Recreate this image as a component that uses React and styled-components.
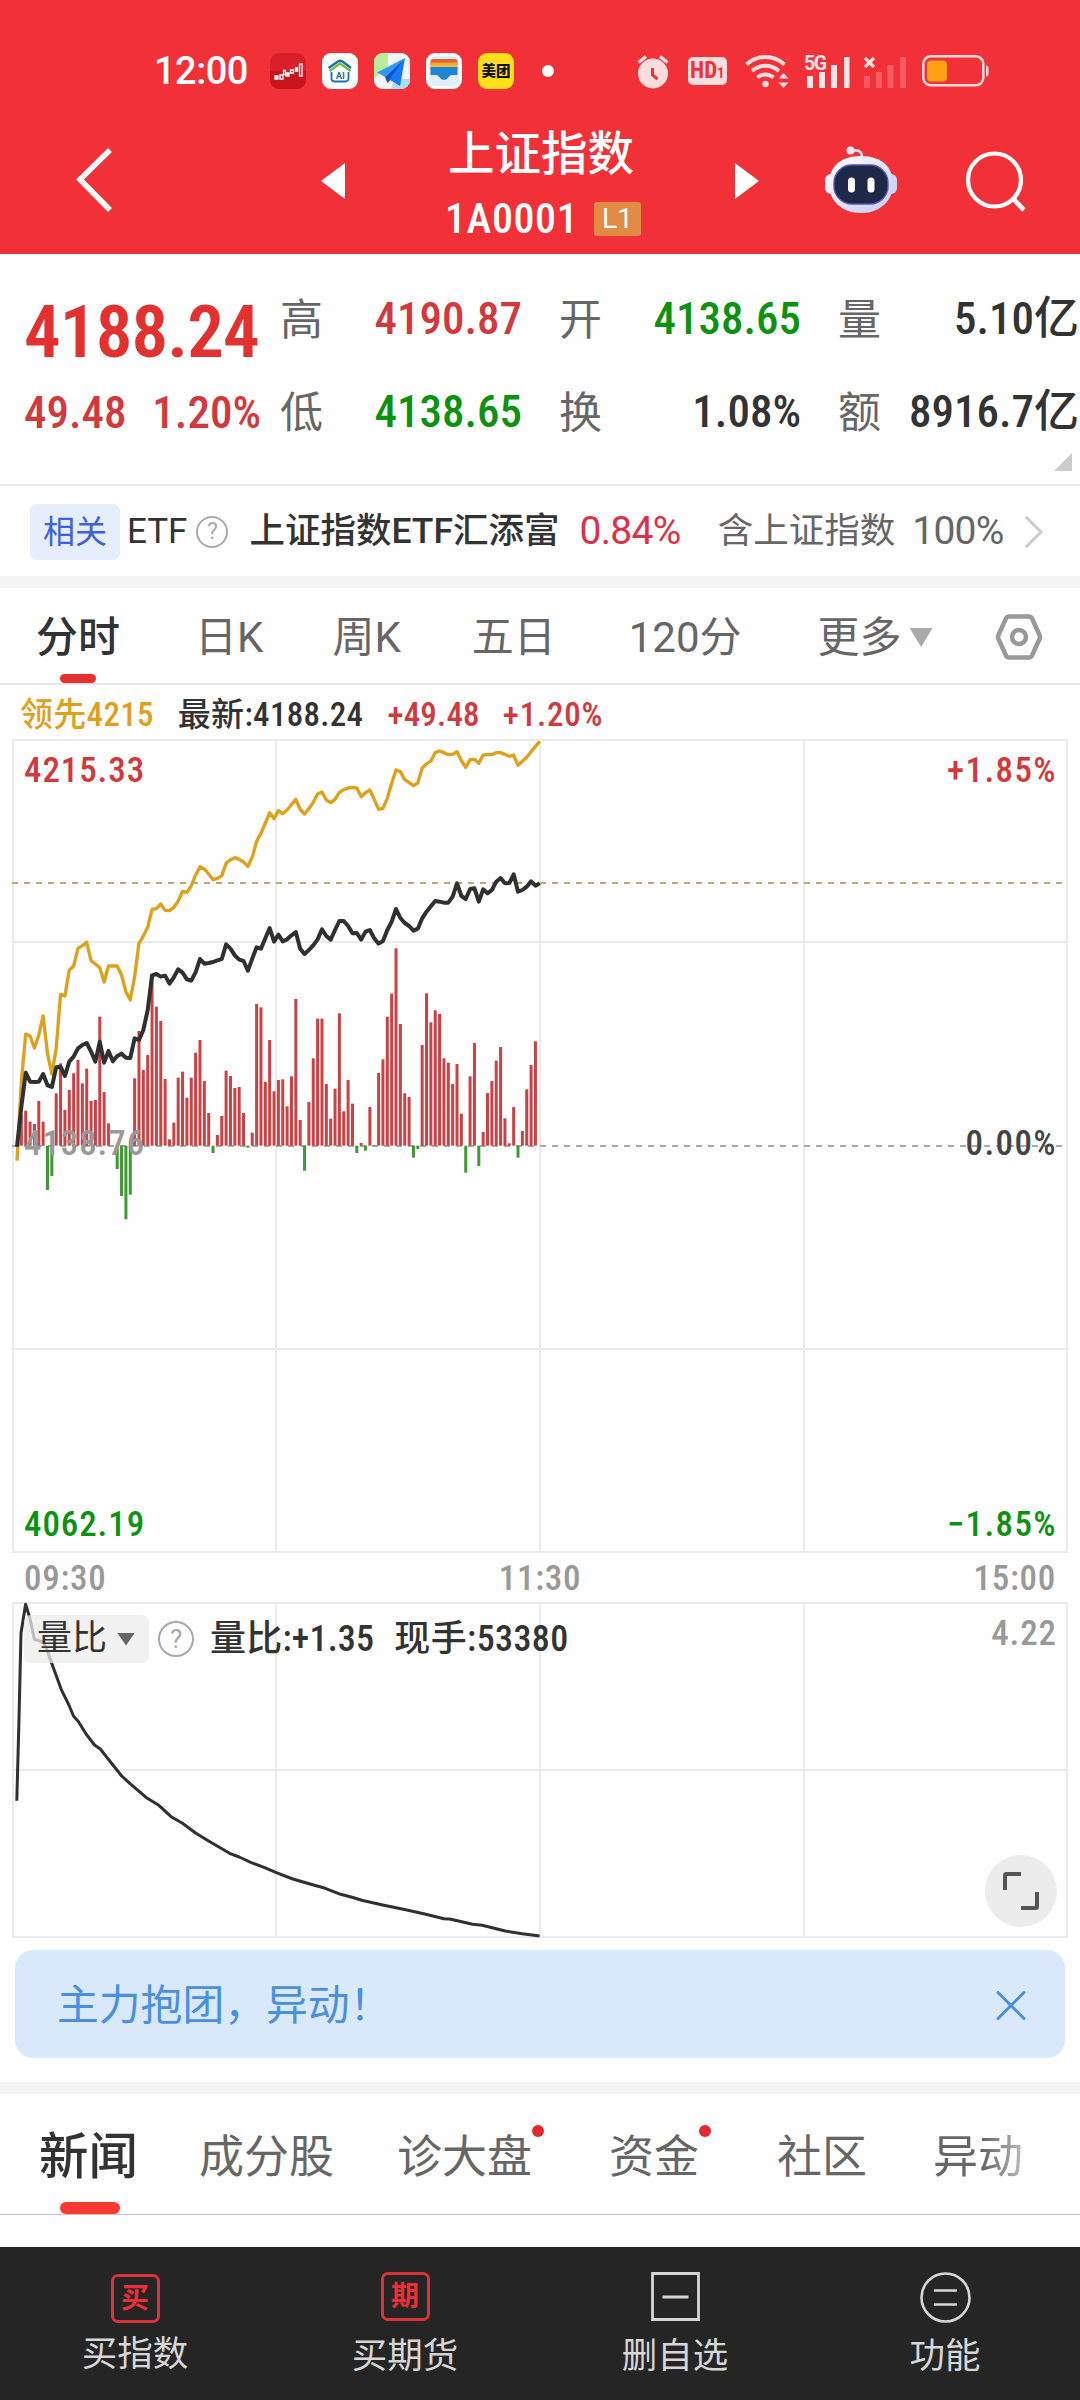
import React from "react";
import styled, { createGlobalStyle } from "styled-components";

const GlobalStyle = createGlobalStyle`
  * { box-sizing: border-box; }
  html, body { margin: 0; padding: 0; background: #fefefe; }
  body { font-family: Roboto, "Noto Sans CJK SC", sans-serif; color: #333; }
  svg { display: block; flex: none; }
`;

const RED = "#d3383c";
const GREEN = "#0b9210";

const Screen = styled.div`
  width: 1080px;
  height: 2400px;
  overflow: hidden;
  display: flex;
  flex-direction: column;
  background: #fefefe;
`;

const T = styled.span`
  display: block;
  flex: none;
  white-space: nowrap;
  font-size: ${(p) => p.$size}px;
  line-height: ${(p) => p.$lh || Math.round(p.$size * 1.2)}px;
  font-weight: ${(p) => p.$weight || 400};
  color: ${(p) => p.$color || "#333"};
  letter-spacing: ${(p) => p.$track || 0}px;
  margin-left: ${(p) => p.$ml || 0}px;
`;

const Num = styled(T)`
  font-stretch: ${(p) => (p.$wide ? "100%" : "75%")};
  font-weight: ${(p) => p.$weight || 500};
`;

/* ---------- header ---------- */

const Header = styled.header`
  background: #f23037;
  height: 254px;
  flex: none;
`;

const StatusBar = styled.div`
  height: 112px;
  padding: 30px 91px 0 154px;
  display: flex;
  align-items: center;
  justify-content: space-between;
`;

const StatusGroup = styled.div`
  display: flex;
  align-items: center;
  gap: ${(p) => p.$gap}px;
`;

const AppBadge = styled.div`
  width: 36px;
  height: 36px;
  border-radius: 9px;
  overflow: hidden;
  background: ${(p) => p.$bg};
  display: flex;
  align-items: center;
  justify-content: center;
`;

const Dot = styled.i`
  display: block;
  width: 12px;
  height: 12px;
  border-radius: 50%;
  background: #fff;
  margin-left: 12px;
`;

const HdBadge = styled.div`
  width: 39px;
  height: 28px;
  margin: 0 4px;
  border-radius: 5px;
  background: #fddcdd;
  color: #f23037;
  font-size: 23px;
  line-height: 28px;
  font-weight: 700;
  font-stretch: 75%;
  display: flex;
  justify-content: center;
  align-items: baseline;
  small { font-size: 14px; }
`;

const TitleBar = styled.div`
  height: 142px;
  display: flex;
  align-items: center;
  padding-left: 76px;
  & > svg { position: relative; top: -2px; }
`;

const TitleBlock = styled.div`
  width: 194px;
  margin: 0 95px 0 101px;
  display: flex;
  flex-direction: column;
  align-items: center;
  gap: 20px;
`;

const TitleText = styled(T)`
  margin-right: 4px;
  padding-top: 1px;
`;

const CodeRow = styled.div`
  display: flex;
  align-items: center;
  justify-content: space-between;
  width: 196px;
  height: 40px;
`;

const Level = styled.span`
  width: 47px;
  height: 34px;
  border-radius: 3px;
  background: #e18b45;
  color: #fff;
  font-size: 28px;
  line-height: 34px;
  text-align: center;
`;

/* ---------- quote ---------- */

const Quote = styled.section`
  position: relative;
  height: 232px;
  border-bottom: 2px solid #ebebeb;
  display: flex;
  flex: none;
`;

const PriceBlock = styled.div`
  width: 256px;
  padding: 42px 0 0 24px;
  flex: none;
`;

const Change = styled.div`
  display: flex;
  justify-content: space-between;
  width: 237px;
  margin-top: 22px;
`;

const Stats = styled.div`
  margin-top: 18px;
  margin-left: 24px;
  display: grid;
  grid-template-columns: 242px 242px 241px;
  grid-auto-rows: 93px;
  column-gap: 37px;
`;

const Stat = styled.div`
  display: flex;
  align-items: center;
  justify-content: space-between;
`;

const StatLabel = styled(T)`
  padding-top: 2px;
`;

const Corner = styled.i`
  position: absolute;
  right: 8px;
  bottom: 13px;
  width: 18px;
  height: 18px;
  background: #ccc;
  clip-path: polygon(100% 0, 100% 100%, 0 100%);
`;

/* ---------- ETF strip ---------- */

const EtfRow = styled.section`
  height: 90px;
  padding: 1px 0 0 30px;
  display: flex;
  align-items: center;
  flex: none;
`;

const Tag = styled.span`
  width: 90px;
  height: 56px;
  border-radius: 7px;
  background: #e6edfc;
  color: #3c62e2;
  font-size: 32px;
  line-height: 57px;
  text-align: center;
`;

const Help = styled.span`
  width: ${(p) => p.$d}px;
  height: ${(p) => p.$d}px;
  margin-left: ${(p) => p.$ml}px;
  border: 2px solid #aaa;
  border-radius: 50%;
  color: #aaa;
  font-size: ${(p) => p.$d * 0.72}px;
  line-height: ${(p) => p.$d - 4}px;
  text-align: center;
  flex: none;
`;

const Strip = styled.div`
  height: 12px;
  background: #f4f4f4;
  flex: none;
`;

/* ---------- tabs ---------- */

const PeriodTabs = styled.nav`
  position: relative;
  height: 97px;
  padding: 4px 0 0 36px;
  border-bottom: 2px solid #e6e6e6;
  display: flex;
  align-items: center;
  flex: none;
`;

const Marker = styled.i`
  position: absolute;
  left: 60px;
  bottom: 0;
  width: ${(p) => p.$w}px;
  height: ${(p) => p.$h}px;
  border-radius: ${(p) => p.$h / 2}px;
  background: ${(p) => p.$color};
`;

const Caret = styled.i`
  display: block;
  flex: none;
  width: ${(p) => p.$w}px;
  height: ${(p) => p.$h}px;
  margin-left: ${(p) => p.$ml}px;
  background: ${(p) => p.$color};
  clip-path: polygon(0 0, 100% 0, 50% 100%);
`;

const Legend = styled.div`
  height: 54px;
  padding: 6px 0 0 20px;
  display: flex;
  align-items: center;
  flex: none;
`;

/* ---------- charts ---------- */

const ChartBox = styled.section`
  position: relative;
  height: ${(p) => p.$h}px;
  flex: none;
`;

const AxisLabel = styled(Num)`
  position: absolute;
  top: ${(p) => p.$top}px;
  ${(p) => (p.$right ? "right: 23px;" : "left: 24px;")}
`;

const TimeAxis = styled.div`
  height: 49px;
  padding: 2px 24px 0 24px;
  display: grid;
  grid-template-columns: 1fr 1fr 1fr;
  align-items: center;
  flex: none;
  & > :nth-child(2) { text-align: center; }
  & > :nth-child(3) { text-align: right; }
`;

const IndicatorBar = styled.div`
  position: absolute;
  left: 24px;
  top: 13px;
  height: 48px;
  display: flex;
  align-items: center;
`;

const IndicatorChip = styled.div`
  width: 125px;
  height: 48px;
  padding-left: 13px;
  border-radius: 7px;
  background: rgba(236, 236, 236, 0.75);
  display: flex;
  align-items: center;
`;

const Expand = styled.button`
  position: absolute;
  right: 23px;
  bottom: 11px;
  width: 72px;
  height: 72px;
  padding: 0;
  border: 0;
  border-radius: 50%;
  background: #ececec;
  display: flex;
  align-items: center;
  justify-content: center;
`;

const Notice = styled.div`
  height: 108px;
  margin: 12px 15px 24px;
  padding: 3px 39px 0 42px;
  border-radius: 18px;
  background: #dae8fb;
  display: flex;
  align-items: center;
  justify-content: space-between;
  flex: none;
`;

const NewsTabs = styled.nav`
  position: relative;
  height: 121px;
  padding: 7px 0 0 39px;
  border-bottom: 1px solid #c4c4c4;
  display: flex;
  align-items: center;
  flex: none;
`;

const NewsTab = styled(T)`
  position: relative;
  ${(p) =>
    p.$fade &&
    `background: linear-gradient(90deg, #666 55%, #bbb 100%);
     -webkit-background-clip: text; background-clip: text; color: transparent;`}
`;

const Unread = styled.i`
  position: absolute;
  right: -12px;
  top: -6px;
  width: 12px;
  height: 12px;
  border-radius: 50%;
  background: #e3292e;
`;

const BottomBar = styled.footer`
  margin-top: auto;
  height: 153px;
  background: #252525;
  display: grid;
  grid-template-columns: repeat(4, 1fr);
  flex: none;
`;

const Action = styled.div`
  padding-top: ${(p) => p.$top || 25}px;
  display: flex;
  flex-direction: column;
  align-items: center;
  gap: ${(p) => p.$gap || 14}px;
`;

const Seal = styled.div`
  width: 49px;
  height: 49px;
  border: 3px solid #dc333b;
  border-radius: 7px;
  color: #ea2f37;
  font-size: 28px;
  line-height: 44px;
  font-weight: 700;
  text-align: center;
`;

/* ---------- data ---------- */

const BASE = 1277;
const STEP = 13.07;
const FIRST = 51;

const BARS = [
  1277, 1185, 1172, 1205, 1212, 1143, 1205, 1410, 1368, 1120, 1030, 1170, 1110, 1060, 1020, 1090, 1046, 1143, 1140, 890,
  1116, 1210, 1277, 1347, 1428, 1498, 1424, 1075, 933, 1050, 1005, 765, 860, 903, 1077, 1258, 1208, 1073, 1055, 1133,
  1073, 998, 960, 1083, 1179, 1299, 1245, 1188, 1052, 1068, 1104, 1101, 1179, 1283, 1238, 852, 862, 1086, 960, 1114,
  1080, 1078, 1159, 1069, 837, 1200, 1352, 1146, 1015, 896, 896, 1092, 1196, 1106, 880, 1174, 1080, 1151, 1299, 1269,
  1292, 1161, 1275, 1059, 1018, 890, 821, 685, 912, 1120, 1131, 1313, 1287, 975, 820, 907, 871, 882, 1015, 1028,
  1092, 1032, 1181, 1358, 1069, 969, 1338, 1236, 1119, 1083, 1022, 981, 1195, 1270, 1161, 1313, 1233, 1108, 1035, 964,
];

const LEADING = [
  1322, 1085, 942, 948, 984, 945, 888, 1000, 1062, 985, 823, 828, 750, 738, 685, 677, 667, 722, 732, 743,
  786, 738, 738, 738, 765, 815, 840, 770, 670, 648, 622, 568, 566, 552, 571, 572, 562, 543, 514, 517,
  498, 465, 440, 447, 462, 479, 475, 467, 430, 419, 413, 418, 426, 439, 412, 364, 340, 309, 278, 296,
  272, 281, 270, 254, 238, 268, 282, 266, 247, 222, 216, 240, 248, 238, 217, 209, 204, 203, 204, 230,
  218, 210, 238, 268, 265, 235, 190, 150, 155, 179, 188, 197, 189, 144, 132, 123, 98, 93, 98, 104,
  103, 95, 122, 142, 119, 118, 130, 105, 104, 104, 98, 98, 103, 109, 105, 136, 124, 112, 95, 79, 64,
];

const LATEST = [
  1280, 1160, 1058, 1085, 1086, 1085, 1062, 1096, 1101, 1042, 1040, 1068, 1025, 1010, 985, 975, 969, 995, 1025, 965,
  1028, 993, 1024, 1008, 1001, 1013, 1014, 955, 960, 930, 870, 766, 762, 770, 767, 791, 772, 748, 758, 778,
  782, 757, 717, 731, 729, 726, 721, 717, 673, 686, 706, 719, 723, 752, 716, 682, 686, 655, 624, 665,
  644, 664, 658, 646, 636, 686, 702, 690, 676, 658, 628, 648, 659, 630, 603, 603, 618, 640, 639, 659,
  635, 630, 655, 671, 663, 630, 605, 567, 594, 609, 618, 632, 626, 595, 575, 559, 543, 545, 548, 548,
  530, 490, 528, 537, 507, 505, 545, 508, 520, 510, 485, 474, 490, 489, 463, 515, 510, 500, 484, 497, 490,
];

const RATIO =
  "16.8,198.7 18.8,124.7 21,31.3 25.6,2.3 29.9,16.3 34.4,37.3 42.1,39.7 45.9,44.7 51.7,61.3 61.2,87.3 68.9,103 73.5,114 78.5,119.7 86.1,132 94.5,143 100.3,147 112.9,163 121.7,174 130.9,182.3 147.3,196.3 158.8,203.3 171.1,214.7 182.5,221.3 195.2,230.7 208.6,239 229.6,251.3 239.2,255 250.7,260.3 264.1,265.3 276.3,270.7 292.8,277 310,282 325.3,286.3 340.6,292.3 352.1,295.3 361.7,298.3 382.7,303 405.7,307.7 424.8,312 443.9,316.7 449.7,317 472.6,322.3 482.2,323.3 505.2,329 522.4,331.7 539.6,334";

const toPoints = (values) => values.map((v, i) => `${FIRST + STEP * i},${v}`).join(" ");

/* ---------- icons ---------- */

const StockIcon = () => (
  <svg width="36" height="36" viewBox="0 0 36 36" fill="none" stroke="#fff" strokeWidth="1.3">
    <path d="M0 18H36V36H0z" fill="#c9151d" stroke="none" />
    <path d="M5 23h3v3H5z M16 20h3v3h-3z M25.500 15h2v3h-2z" fill="#fff" />
    <path d="M10 22h3v4h-3z M13.500 17.500h2v4h-2z M20.500 17h3v3h-3z M29.500 11h2.500v12h-2.500z" />
  </svg>
);

const HomeAiIcon = () => (
  <svg width="36" height="36" viewBox="0 0 36 36" fill="none">
    <path d="M6.500 15 16 8.500c1.500-1 3-1 4.500 0L29 15" stroke="#1672b5" strokeWidth="2.400" />
    <path d="M7.500 18 18 10.500 28.500 18" stroke="#7bb944" strokeWidth="2.400" />
    <path d="M9.500 19v6.500a3 3 0 0 0 3 3h11a3 3 0 0 0 3-3V19" stroke="#1672b5" strokeWidth="1.800" />
    <text x="18.300" y="25.500" fontSize="9.500" fontWeight="700" fill="#1672b5" textAnchor="middle" fontFamily="Roboto">AI</text>
  </svg>
);

const PlaneIcon = () => (
  <svg width="36" height="36" viewBox="0 0 36 36">
    <path d="M0 0h14v14L0 26z" fill="#b9ec9d" />
    <path d="M20 26h16v10H17z" fill="#a8defa" />
    <path d="M14 0h22v26H22L12 36H0V26l14-12z" fill="#eef4fa" />
    <path d="M31 5 3 19.500l8 4.500z" fill="#2f97ff" />
    <path d="M31 5 11 24l2.500 6 3-3z" fill="#0b56cc" />
    <path d="M31 5 15.500 26.500 26 33z" fill="#1779f5" />
  </svg>
);

const WalletIcon = () => (
  <svg width="36" height="36" viewBox="0 0 36 36">
    <rect x="3" y="3" width="30" height="30" rx="6" fill="#e3edf8" />
    <path d="M4.500 12V9a3 3 0 0 1 3-3h21a3 3 0 0 1 3 3v3z" fill="#e6632c" />
    <path d="M4.500 9.500h27v7h-27z" fill="#f7a63a" />
    <path d="M4.500 12h27v5h-27z" fill="#f5bd3e" />
    <path d="M4.500 14h27v8h-6c-1.500 0-2.200 1-3 2.300-2 3.400-7 3.400-9 0-.8-1.300-1.500-2.300-3-2.300h-6z" fill="#1d85d8" />
  </svg>
);

const AlarmIcon = () => (
  <svg width="32" height="36" viewBox="0 0 32 36">
    <circle cx="16" cy="20.500" r="15" fill="#fddcdd" />
    <path d="M1.500 9.500 9 3.500M30.500 9.500 23 3.500" stroke="#fddcdd" strokeWidth="3.500" />
    <path d="M15.500 15v7l5 4" fill="none" stroke="#f23037" strokeWidth="3" />
  </svg>
);

const WifiIcon = () => (
  <svg width="44" height="36" viewBox="0 0 44 36" fill="none" stroke="#fddcdd" strokeWidth="4">
    <path d="M1.500 11.500a28 28 0 0 1 38 0" />
    <path d="M7 18a20 20 0 0 1 27 0" />
    <path d="M12.500 24.500a12 12 0 0 1 16 0" />
    <circle cx="20.500" cy="31" r="3.200" fill="#fddcdd" stroke="none" />
    <path d="m38.500 20 5 5.500h-10zM38.500 35l5-5.500h-10z" fill="#fddcdd" stroke="none" />
  </svg>
);

const SignalIcon = () => (
  <svg width="46" height="36" viewBox="0 0 46 36" fill="#fde4e5" overflow="visible">
    <path d="M3 23h6v12H3zM15 19h6v16h-6zM27 12h6v23h-6zM40 4h5.500v31H40z" />
    <text x="0" y="16.500" fontSize="19.500" fontWeight="700" fontFamily="Roboto" letterSpacing="-1.500">5G</text>
  </svg>
);

const NoSignalIcon = () => (
  <svg width="43" height="36" viewBox="0 0 43 36" fill="#f75b61">
    <path d="M0 23h6v12H0zM12 19h6v16h-6zM23.500 12h6v23h-6zM36 4h6v31h-6z" />
    <path d="m1 5 9 9m0-9-9 9" stroke="#fddcdd" strokeWidth="3.200" />
  </svg>
);

const BatteryIcon = () => (
  <svg width="67" height="36" viewBox="0 0 67 36">
    <rect x="1.300" y="3.300" width="60" height="29" rx="7.500" fill="none" stroke="#fddcdd" strokeWidth="2.500" />
    <rect x="5" y="7.500" width="20" height="21" rx="4" fill="#ffa114" />
    <path d="M64 12.500a2.500 2.500 0 0 1 2.500 2.500v6a2.500 2.500 0 0 1-2.500 2.500z" fill="#fddcdd" />
  </svg>
);

const BackIcon = () => (
  <svg width="38" height="66" viewBox="0 0 38 66" fill="none" stroke="#fff" strokeWidth="5.500">
    <path d="M34 2 4 31.500 34 62" />
  </svg>
);

const Arrow = styled.svg`
  margin-left: ${(p) => p.$ml || 0}px;
`;

const RobotIcon = () => (
  <Arrow $ml={66} width="72" height="70" viewBox="0 0 72 70">
    <defs>
      <linearGradient id="shell" x1="0" y1="0" x2="1" y2="1">
        <stop offset="0" stopColor="#ffffff" />
        <stop offset="1" stopColor="#c3ccf3" />
      </linearGradient>
    </defs>
    <path d="M26 5q12-3 11 8" fill="none" stroke="#f5dfee" strokeWidth="2.600" />
    <circle cx="25.500" cy="4.500" r="4" fill="#f7e8f2" />
    <rect x="0" y="28" width="12" height="20" rx="6" fill="#eef0fc" />
    <rect x="60" y="28" width="12" height="20" rx="6" fill="#cfd4f6" />
    <path d="M36 10c22 0 32 12 32 28S56 67 36 67 4 54 4 38s10-28 32-28z" fill="url(#shell)" />
    <rect x="9" y="19" width="54" height="39" rx="18" fill="#1d2946" stroke="#5a50b8" strokeWidth="1.400" />
    <rect x="23" y="31.500" width="7" height="15" rx="3.500" fill="#fff" />
    <rect x="42.500" y="31.500" width="7" height="15" rx="3.500" fill="#fff" />
  </Arrow>
);

const SearchIcon = () => (
  <Arrow $ml={68} width="62" height="62" viewBox="0 0 62 62" fill="none" stroke="#fff" strokeWidth="4.200">
    <circle cx="29.500" cy="30" r="26.500" />
    <path d="m48.500 49 10.500 11" strokeWidth="4.800" />
  </Arrow>
);

const SettingsIcon = () => (
  <Arrow $ml={62} width="48" height="48" viewBox="0 0 48 48" fill="none" stroke="#999" strokeWidth="4.500" strokeLinejoin="round">
    <path d="M14 2.500h20q2 0 3 1.800L44.500 21q1 2 0 4L37 41.700q-1 1.800-3 1.800H14q-2 0-3-1.800L3.500 25q-1-2 0-4L11 4.300q1-1.800 3-1.800z" />
    <circle cx="24" cy="23" r="7" />
  </Arrow>
);

const Chevron = () => (
  <Arrow $ml={20} width="20" height="34" viewBox="0 0 20 34" fill="none" stroke="#ccc" strokeWidth="3">
    <path d="m2 2 15 15L2 32" />
  </Arrow>
);

const Grid = ({ rows, height }) => (
  <g stroke="#ebebeb" strokeWidth="2">
    {[13, 276, 540, 804, 1067].map((x) => (
      <path key={x} d={`M${x} 0V${height}`} />
    ))}
    {rows.map((y) => (
      <path key={y} d={`M12 ${y}H1068`} />
    ))}
  </g>
);

const PriceChart = () => (
  <svg width="1080" height="814" viewBox="0 0 1080 814" fill="none">
    <Grid rows={[1, 203, 610, 813]} height={814} />
    <g strokeWidth="2" strokeDasharray="6 6">
      <path d="M12 144H1068" stroke="#bda77c" />
      <path d="M12 407H1068" stroke="#aaa" />
    </g>
    <g transform="translate(0 -19) scale(0.33333)">
      {BARS.map((v, i) => (
        <rect
          key={i}
          x={FIRST + STEP * i - 4.5}
          y={Math.min(v, BASE)}
          width="9"
          height={Math.abs(v - BASE)}
          fill={v > BASE ? "#3f9a33" : "#cc4144"}
        />
      ))}
      <g strokeLinejoin="round">
        <polyline points={toPoints(LEADING)} stroke="#dfa01c" strokeWidth="10" />
        <polyline points={toPoints(LATEST)} stroke="#303030" strokeWidth="12" />
      </g>
    </g>
  </svg>
);

const RatioChart = () => (
  <svg width="1080" height="336" viewBox="0 0 1080 336" fill="none">
    <Grid rows={[1, 168, 335]} height={336} />
    <polyline points={RATIO} stroke="#303030" strokeWidth="3" strokeLinejoin="round" />
  </svg>
);

/* ---------- page ---------- */

const STATS = [
  ["高", "4190.87", RED],
  ["开", "4138.65", GREEN],
  ["量", "5.10亿", "#333"],
  ["低", "4138.65", GREEN],
  ["换", "1.08%", "#333"],
  ["额", "8916.7亿", "#333"],
];

export default function App() {
  return (
    <>
      <GlobalStyle />
      <Screen>
        <Header>
          <StatusBar>
            <StatusGroup $gap={22}>
              <T $size={38} $color="#fff" $weight={500} $track={-0.5}>12:00</T>
              <StatusGroup $gap={16}>
                <AppBadge $bg="#d8202a"><StockIcon /></AppBadge>
                <AppBadge $bg="#fff"><HomeAiIcon /></AppBadge>
                <AppBadge $bg="#fff"><PlaneIcon /></AppBadge>
                <AppBadge $bg="#fff"><WalletIcon /></AppBadge>
                <AppBadge $bg="#ffe01b"><T $size={14.5} $weight={900} $color="#111">美团</T></AppBadge>
                <Dot />
              </StatusGroup>
            </StatusGroup>
            <StatusGroup $gap={14.6}>
              <AlarmIcon />
              <HdBadge>HD<small>1</small></HdBadge>
              <WifiIcon />
              <SignalIcon />
              <NoSignalIcon />
              <BatteryIcon />
            </StatusGroup>
          </StatusBar>
          <TitleBar>
            <BackIcon />
            <Arrow $ml={207} width="24" height="36" viewBox="0 0 24 36"><path d="M24 0v36L0 18z" fill="#fff" /></Arrow>
            <TitleBlock>
              <TitleText $size={46.5} $lh={50} $weight={500} $color="#fff">上证指数</TitleText>
              <CodeRow>
                <Num $size={42} $lh={40} $track={0.6} $color="#fff">1A0001</Num>
                <Level>L1</Level>
              </CodeRow>
            </TitleBlock>
            <Arrow width="24" height="36" viewBox="0 0 24 36"><path d="M0 0v36l24-18z" fill="#fff" /></Arrow>
            <RobotIcon />
            <SearchIcon />
          </TitleBar>
        </Header>

        <Quote>
          <PriceBlock>
            <Num $size={73} $lh={72} $weight={600} $track={-0.9} $color="#e2312f">4188.24</Num>
            <Change>
              <Num $size={45} $lh={46} $color={RED}>49.48</Num>
              <Num $size={45} $lh={46} $color={RED}>1.20%</Num>
            </Change>
          </PriceBlock>
          <Stats>
            {STATS.map(([label, value, color]) => (
              <Stat key={label}>
                <StatLabel $size={43} $color="#666">{label}</StatLabel>
                <Num $size={45} $color={color}>{value}</Num>
              </Stat>
            ))}
          </Stats>
          <Corner />
        </Quote>

        <EtfRow>
          <Tag>相关</Tag>
          <T $size={35} $ml={7}>ETF</T>
          <Help $d={32} $ml={9}>?</Help>
          <T $size={35.5} $ml={21} $weight={500}>上证指数ETF汇添富</T>
          <Num $size={39} $ml={20} $weight={400} $wide $track={-0.7} $color="#df3048">0.84%</Num>
          <T $size={35.5} $ml={37} $color="#666">含上证指数</T>
          <Num $size={39} $ml={17} $weight={400} $wide $track={-0.7} $color="#666">100%</Num>
          <Chevron />
        </EtfRow>
        <Strip />

        <PeriodTabs>
          <T $size={42} $weight={500}>分时</T>
          <T $size={42} $ml={75} $color="#666">日K</T>
          <T $size={42} $ml={69} $color="#666">周K</T>
          <T $size={42} $ml={71} $color="#666">五日</T>
          <T $size={42} $ml={73} $color="#666">120分</T>
          <T $size={42} $ml={76} $color="#666">更多</T>
          <Caret $w={23} $h={19} $ml={8} $color="#aaa" />
          <SettingsIcon />
          <Marker $w={36} $h={9} $color="#e8302f" />
        </PeriodTabs>

        <Legend>
          <Num $size={33} $track={0.3} $color="#dfa01c">领先4215</Num>
          <Num $size={33} $track={0.3} $ml={24}>最新:4188.24</Num>
          <Num $size={33} $track={0.2} $ml={24} $color={RED}>+49.48</Num>
          <Num $size={33} $track={0.8} $ml={23} $color={RED}>+1.20%</Num>
        </Legend>

        <ChartBox $h={814}>
          <PriceChart />
          <AxisLabel $size={35} $track={0.9} $top={11} $color={RED}>4215.33</AxisLabel>
          <AxisLabel $size={35} $track={1.4} $top={11} $right $color={RED}>+1.85%</AxisLabel>
          <AxisLabel $size={35} $track={0.9} $top={384} $color="#999">4138.76</AxisLabel>
          <AxisLabel $size={35} $track={1.4} $top={384} $right $color="#444">0.00%</AxisLabel>
          <AxisLabel $size={35} $track={0.9} $top={765} $color={GREEN}>4062.19</AxisLabel>
          <AxisLabel $size={35} $track={1.4} $top={765} $right $color={GREEN}>−1.85%</AxisLabel>
        </ChartBox>

        <TimeAxis>
          <Num $size={35} $track={0.7} $color="#999">09:30</Num>
          <Num $size={35} $track={0.7} $color="#999">11:30</Num>
          <Num $size={35} $track={0.7} $color="#999">15:00</Num>
        </TimeAxis>

        <ChartBox $h={336}>
          <RatioChart />
          <IndicatorBar>
            <IndicatorChip>
              <T $size={35}>量比</T>
              <Caret $w={18} $h={13} $ml={10} $color="#666" />
            </IndicatorChip>
            <Help $d={36} $ml={9}>?</Help>
            <Num $size={36} $track={0.2} $ml={16}>量比:+1.35</Num>
            <Num $size={36} $track={0.4} $ml={20}>现手:53380</Num>
          </IndicatorBar>
          <AxisLabel $size={35} $track={0.9} $top={11} $right $color="#999">4.22</AxisLabel>
          <Expand>
            <svg width="38" height="38" viewBox="0 0 38 38" fill="none" stroke="#555" strokeWidth="4">
              <path d="M3 18V3.500q0-1.500 1.500-1.500H19M35 20v14.500q0 1.500-1.500 1.500H19" />
            </svg>
          </Expand>
        </ChartBox>

        <Notice>
          <T $size={41.8} $color="#4a90e2">主力抱团，异动！</T>
          <svg width="30" height="30" viewBox="0 0 30 30" stroke="#4a90e2" strokeWidth="3" strokeLinecap="round">
            <path d="m2 1.500 26 26M28 1.500 2 27.500" />
          </svg>
        </Notice>
        <Strip />

        <NewsTabs>
          <NewsTab $size={49.5} $weight={500}>新闻</NewsTab>
          <NewsTab $size={45} $ml={61} $color="#666">成分股</NewsTab>
          <NewsTab $size={45} $ml={63} $color="#666">诊大盘<Unread /></NewsTab>
          <NewsTab $size={45} $ml={77} $color="#666">资金<Unread /></NewsTab>
          <NewsTab $size={45} $ml={78} $color="#666">社区</NewsTab>
          <NewsTab $size={45} $ml={66} $color="#666" $fade>异动</NewsTab>
          <Marker $w={60} $h={12} $color="#fd3833" />
        </NewsTabs>

        <BottomBar>
          <Action $top={27} $gap={10}>
            <Seal>买</Seal>
            <T $size={35.5} $color="#d6d6d6">买指数</T>
          </Action>
          <Action>
            <Seal>期</Seal>
            <T $size={35.5} $color="#d6d6d6">买期货</T>
          </Action>
          <Action>
            <svg width="49" height="49" viewBox="0 0 49 49" fill="none" stroke="#d6d6d6" strokeWidth="2.800">
              <path d="M1.500 1.500h46v46h-46zM11.500 25h26" />
            </svg>
            <T $size={35.5} $color="#d6d6d6">删自选</T>
          </Action>
          <Action $gap={12}>
            <svg width="51" height="51" viewBox="0 0 51 51" fill="none" stroke="#d6d6d6" strokeWidth="2.600">
              <circle cx="25.500" cy="25.500" r="24" />
              <path d="M14 18.500h23M14 32.500h23" />
            </svg>
            <T $size={35.5} $color="#d6d6d6">功能</T>
          </Action>
        </BottomBar>
      </Screen>
    </>
  );
}
